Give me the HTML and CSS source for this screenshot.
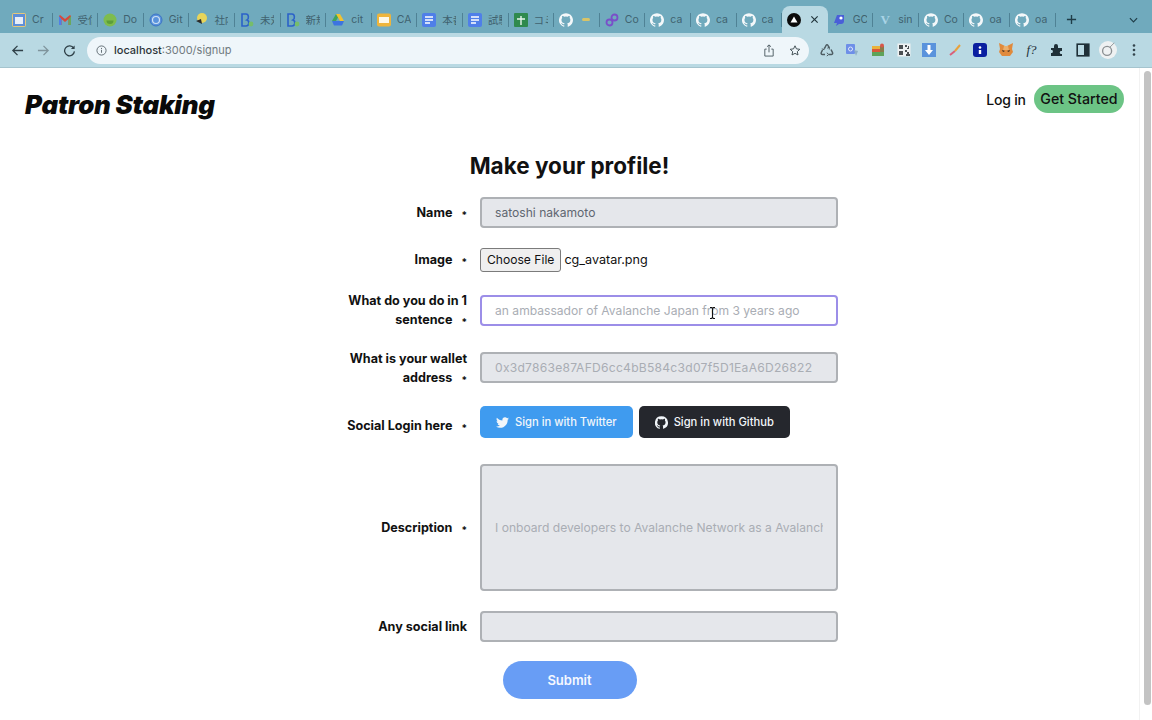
FILE: index.html
```html
<!DOCTYPE html>
<html lang="en">
<head>
  <meta charset="UTF-8">
  <meta name="viewport" content="width=device-width, initial-scale=1.0">
  <title>Patron Staking</title>
  <link rel="stylesheet" href="styles.css">
</head>
<body>
  <svg class="defs" xmlns="http://www.w3.org/2000/svg">
    <symbol id="gh" viewBox="0 0 24 24"><path d="M12 .3a12 12 0 0 0-3.8 23.4c.6.1.8-.3.8-.6v-2c-3.3.7-4-1.600-4-1.600-.6-1.400-1.400-1.800-1.400-1.800-1-.7.1-.7.1-.7 1.200.1 1.800 1.200 1.800 1.200 1 1.800 2.800 1.300 3.500 1 .1-.8.4-1.300.7-1.600-2.700-.3-5.500-1.300-5.500-6 0-1.200.5-2.300 1.300-3.100-.2-.4-.6-1.600 0-3.200 0 0 1-.3 3.400 1.200a11.500 11.500 0 0 1 6 0c2.300-1.500 3.300-1.200 3.300-1.200.6 1.600.2 2.800 0 3.200.9.8 1.300 1.900 1.300 3.200 0 4.600-2.800 5.600-5.500 5.900.5.4.9 1 .9 2.200v3.300c0 .3.1.7.8.6A12 12 0 0 0 12 .3"/></symbol>
    <symbol id="doc" viewBox="0 0 14 14"><rect width="14" height="14" rx="2" fill="#4f7fe8"/><path d="M3 4h8M3 7h8M3 10h5" stroke="#fff" stroke-width="1.400"/></symbol>
    <symbol id="bee" viewBox="0 0 14 14"><path d="M2 1h4c3 0 3 5 1 6 3 1 2 6-1 6H2z" fill="none" stroke="#2b62c9" stroke-width="1.600"/><circle cx="11" cy="11" r="2.400" fill="#76bd6a"/></symbol>
  </svg>

  <div class="tabstrip">
    <div class="tab"><svg class="fav" viewBox="0 0 14 14"><rect width="14" height="14" rx="2" fill="#e6c77a"/><rect x="1" y="1" width="12" height="12" fill="#5f8fd8"/><rect x="3" y="4" width="8" height="7" fill="#e8eef8"/></svg><span>Cr</span></div>
    <div class="tab"><svg class="fav" viewBox="0 0 14 14"><path d="M1 3v9h2.500V6L7 9l3.500-3v6H13V3l-1-1-5 4-5-4z" fill="#d8483a"/><path d="M1 3v9h2.500V6z" fill="#4f7fe8"/><path d="M13 3v9h-2.500V6z" fill="#6ba75c"/></svg><span>受信</span></div>
    <div class="tab"><svg class="fav" viewBox="0 0 14 14"><circle cx="7" cy="7" r="6.500" fill="#7ebc4e"/><path d="M3.500 7.500a3.500 3.500 0 0 0 7 0z" fill="#5c9e3a"/></svg><span>Do</span></div>
    <div class="tab"><svg class="fav" viewBox="0 0 14 14"><circle cx="7" cy="7" r="6" fill="#5a93dc" stroke="#3d74c4"/><circle cx="7" cy="7" r="3.500" fill="none" stroke="#cfe2f5" stroke-width="1.200"/></svg><span>Git</span></div>
    <div class="tab"><svg class="fav" viewBox="0 0 14 14"><circle cx="8" cy="5" r="5" fill="#e8d55a"/><path d="M2 8l5-2 1 5z" fill="#2b2b2b"/></svg><span>社内</span></div>
    <div class="tab"><svg class="fav"><use href="#bee"/></svg><span>未対</span></div>
    <div class="tab"><svg class="fav"><use href="#bee"/></svg><span>新規</span></div>
    <div class="tab"><svg class="fav" viewBox="0 0 14 14"><path d="M5 1h4l-4 7H1z" fill="#3fa45b"/><path d="M9 1l4 7h-4L5 1z" fill="#f2c230"/><path d="M1 8h12l-2 4.500H3z" fill="#3d74e0"/></svg><span>cit</span></div>
    <div class="tab"><svg class="fav" viewBox="0 0 14 14"><rect width="14" height="13" y=".5" rx="2" fill="#eeb53c"/><rect x="2" y="4" width="10" height="6" fill="#fdf8e8"/></svg><span>CA</span></div>
    <div class="tab"><svg class="fav"><use href="#doc"/></svg><span>本番</span></div>
    <div class="tab"><svg class="fav"><use href="#doc"/></svg><span>試験</span></div>
    <div class="tab"><svg class="fav" viewBox="0 0 14 14"><rect width="14" height="14" rx="1" fill="#2f8a4e"/><path d="M7 3v9M3 6h8" stroke="#e8f5ec" stroke-width="1.400"/></svg><span>コミ</span></div>
    <div class="tab"><svg class="fav gh"><use href="#gh"/></svg><i class="spark"></i></div>
    <div class="tab"><svg class="fav" viewBox="0 0 14 14" fill="none" stroke="#7a4fc9" stroke-width="1.800"><circle cx="4.500" cy="9.500" r="3"/><circle cx="9.500" cy="4.500" r="3"/></svg><span>Co</span></div>
    <div class="tab"><svg class="fav gh"><use href="#gh"/></svg><span>ca</span></div>
    <div class="tab"><svg class="fav gh"><use href="#gh"/></svg><span>ca</span></div>
    <div class="tab"><svg class="fav gh"><use href="#gh"/></svg><span>ca</span></div>
    <div class="tab tab-active">
      <svg class="fav" viewBox="0 0 14 14"><circle cx="7" cy="7" r="7" fill="#0b0b0b"/><path d="M7 3.500l3.500 6h-7z" fill="#fff"/></svg>
      <svg class="tab-close" viewBox="0 0 10 10"><path d="M1.500 1.500l7 7M8.500 1.500l-7 7" stroke="#23363d" stroke-width="1.300"/></svg>
    </div>
    <div class="tab"><svg class="fav" viewBox="0 0 14 14"><path d="M4 2h7v6a3 3 0 0 1-3 3H6l-3 2 1-3H1z" fill="#4a5fd8"/><circle cx="8" cy="5" r="1.600" fill="#fff"/></svg><span>GC</span></div>
    <div class="tab"><b class="fav-v">V</b><span>sin</span></div>
    <div class="tab"><svg class="fav gh"><use href="#gh"/></svg><span>Co</span></div>
    <div class="tab"><svg class="fav gh"><use href="#gh"/></svg><span>oa</span></div>
    <div class="tab"><svg class="fav gh"><use href="#gh"/></svg><span>oa</span></div>
    <svg class="new-tab" viewBox="0 0 12 12"><path d="M6 1v10M1 6h10" stroke="#1f3d48" stroke-width="1.500"/></svg>
    <svg class="tab-menu" viewBox="0 0 10 6"><path d="M1 1l4 4 4-4" fill="none" stroke="#1f3d48" stroke-width="1.300"/></svg>
  </div>

  <div class="toolbar">
    <div class="nav-btn"><svg viewBox="0 0 14 14"><path d="M13 7H2M7 2L2 7l5 5" fill="none" stroke="#2f4048" stroke-width="1.400"/></svg></div>
    <div class="nav-btn"><svg viewBox="0 0 14 14"><path d="M1 7h11M7 2l5 5-5 5" fill="none" stroke="#7f949c" stroke-width="1.400"/></svg></div>
    <div class="nav-btn"><svg viewBox="0 0 14 14"><path d="M11.500 4.500A5.300 5.300 0 1 0 12.300 8" fill="none" stroke="#2f4048" stroke-width="1.400"/><path d="M12.500 1.500v4h-4z" fill="#2f4048"/></svg></div>
    <div class="address">
      <svg class="addr-info" viewBox="0 0 12 12"><circle cx="6" cy="6" r="5" fill="none" stroke="#5a666c"/><path d="M6 5.300v3.200M6 3.200v1.200" stroke="#5a666c"/></svg>
      <span class="url"><b>localhost</b>:3000/signup</span>
      <svg class="addr-act" viewBox="0 0 12 14"><path d="M3.500 5.500H1.500v7.500h9V5.500H8.500M6 9V1M3.800 3L6 1l2.200 2" fill="none" stroke="#4c5a60"/></svg>
      <svg class="addr-act" viewBox="0 0 14 14"><path d="M7 1.500l1.700 3.600 3.900.5-2.900 2.700.8 3.900L7 10.300l-3.500 1.900.8-3.900L1.400 5.600l3.900-.5z" fill="none" stroke="#3d4a50" stroke-width="1.100"/></svg>
    </div>
    <div class="ext-list">
      <div class="ext"><svg viewBox="0 0 14 14" fill="none" stroke="#4d5c62" stroke-width="1.500"><path d="M4.500 5.500L6 2.500c.5-.9 1.500-.9 2 0l1.300 2.300M11 6.500l1.500 3c.5 1-.1 2-1.200 2H9M5 11.500H2.500c-1.100 0-1.700-1-1.200-2L2.500 7"/><path d="M9.300 6.500v-2.300l-2 1M6.800 9.800l2 1.700-2 1.500M1.800 5.800l2.300.9.300-2.300" stroke-width="1"/></svg></div>
      <div class="ext"><svg viewBox="0 0 14 14"><rect x="1" y="1" width="9" height="10" rx="1" fill="#6e8fe8"/><circle cx="5.500" cy="6" r="2" fill="none" stroke="#dfe7fa"/><path d="M9 7l4 1-2 5z" fill="#8fb0c8"/></svg></div>
      <div class="ext"><svg viewBox="0 0 14 14"><rect x="1" y="3" width="9" height="3" fill="#e9b23c"/><rect x="1" y="6" width="9" height="3" fill="#d9573a"/><rect x="1" y="9" width="12" height="4" fill="#5ea35a"/><rect x="9" y="3" width="4" height="6" fill="#8a7a48"/><circle cx="11" cy="2.500" r="2" fill="#d8574a"/></svg></div>
      <div class="ext"><svg viewBox="0 0 14 14"><rect x=".5" y=".5" width="13" height="13" fill="#eef1f2"/><path d="M2 2h4v4H2zM8 2h2v2H8zM11 3h1v3h-2V5h1zM2 8h4v4H2zM8 7h2v2H8zM10 9h2v2h1v2H9v-2h1z" fill="#4a4f52"/></svg></div>
      <div class="ext"><svg viewBox="0 0 14 14"><rect width="14" height="14" fill="#5a93dc"/><path d="M5.500 2h3v5H11l-4 5-4-5h2.500z" fill="#fff"/></svg></div>
      <div class="ext"><svg viewBox="0 0 14 14"><path d="M2 12l5-4" stroke="#d9607a" stroke-width="2"/><path d="M7 8l5-6" stroke="#e8a23c" stroke-width="2"/></svg></div>
      <div class="ext"><svg viewBox="0 0 14 14"><rect width="14" height="14" rx="3" fill="#0a1fa0"/><circle cx="7" cy="4.500" r="1.300" fill="#fff"/><rect x="5.800" y="7" width="2.400" height="4" fill="#fff"/></svg></div>
      <div class="ext"><svg viewBox="0 0 14 14"><path d="M0 0l6 3h2l6-3-1 6 1 3-3 4H3L0 9l1-3z" fill="#e08a3c"/><path d="M5 3h4l1 4H4z" fill="#eab06e"/><path d="M3 7l3 1-2 1zM11 7L8 8l2 1z" fill="#3a2a1c"/></svg></div>
      <div class="ext"><span class="ext-f">f?</span></div>
      <div class="ext"><svg viewBox="0 0 14 14"><path d="M1 5h3V3a2 2 0 0 1 4 0v2h4v3h-1.500a2 2 0 0 0 0 3H12v2H1v-3h1a1.700 1.700 0 0 0 0-3H1z" fill="#1f3038"/></svg></div>
      <div class="ext"><svg viewBox="0 0 14 14"><rect x="1.200" y="1.200" width="11.600" height="11.600" fill="none" stroke="#1f3038" stroke-width="1.600"/><rect x="8" y="2" width="4" height="10" fill="#1f3038"/></svg></div>
      <div class="ext"><svg class="ext-avatar" viewBox="0 0 20 20"><circle cx="10" cy="10" r="10" fill="#eef1f2"/><circle cx="9" cy="11" r="5" fill="none" stroke="#8a8f92" stroke-width="1.500"/><path d="M12 7l5-5" stroke="#8a8f92"/></svg></div>
      <div class="ext"><svg viewBox="0 0 14 14"><circle cx="7" cy="2.500" r="1.300" fill="#33444c"/><circle cx="7" cy="7" r="1.300" fill="#33444c"/><circle cx="7" cy="11.500" r="1.300" fill="#33444c"/></svg></div>
    </div>
  </div>

  <div class="viewport">
    <div class="page">
      <header class="site-header">
        <div class="logo">Patron Staking</div>
        <nav class="site-nav">
          <a class="login">Log in</a>
          <a class="get-started">Get Started</a>
        </nav>
      </header>

      <h1>Make your profile!</h1>

      <form class="profile-form">
        <label class="lbl">Name <em>*</em></label>
        <input class="field" type="text" value="satoshi nakamoto">

        <label class="lbl">Image <em>*</em></label>
        <div class="file-row"><span class="file-btn">Choose File</span><span>cg_avatar.png</span></div>

        <label class="lbl">What do you do in 1 sentence <em>*</em></label>
        <div class="field-wrap">
          <input class="field field-focus" type="text" placeholder="an ambassador of Avalanche Japan from 3 years ago">
          <svg class="ibeam" viewBox="0 0 7 12"><path d="M1 .5h1.500l1 1 1-1H6M3.500 1.500v9M1 11.500h1.500l1-1 1 1H6" fill="none" stroke="#111" stroke-width="1.100"/></svg>
        </div>

        <label class="lbl">What is your wallet address <em>*</em></label>
        <input class="field field-addr" type="text" placeholder="0x3d7863e87AFD6cc4bB584c3d07f5D1EaA6D26822">

        <label class="lbl">Social Login here <em>*</em></label>
        <div class="social-row">
          <a class="social twitter"><svg viewBox="0 0 24 24"><path d="M23.953 4.570a10 10 0 01-2.825.775 4.958 4.958 0 002.163-2.723c-.951.555-2.005.959-3.127 1.184a4.920 4.920 0 00-8.384 4.482C7.690 8.095 4.067 6.130 1.640 3.162a4.822 4.822 0 00-.666 2.475c0 1.710.870 3.213 2.188 4.096a4.904 4.904 0 01-2.228-.616v.060a4.923 4.923 0 003.946 4.827 4.996 4.996 0 01-2.212.085 4.936 4.936 0 004.604 3.417 9.867 9.867 0 01-6.102 2.105c-.390 0-.779-.023-1.170-.067a13.995 13.995 0 007.557 2.209c9.053 0 13.998-7.496 13.998-13.985 0-.210 0-.420-.015-.630A9.935 9.935 0 0024 4.590z"/></svg>Sign in with Twitter</a>
          <a class="social github"><svg><use href="#gh"/></svg>Sign in with Github</a>
        </div>

        <label class="lbl">Description <em>*</em></label>
        <input class="field field-tall" type="text" placeholder="I onboard developers to Avalanche Network as a Avalanche ambassador">

        <label class="lbl">Any social link</label>
        <input class="field" type="text">

        <button class="submit" type="button">Submit</button>
      </form>
    </div>
    <div class="scrollbar"><div class="thumb"></div></div>
  </div>
</body>
</html>
```

FILE: styles.css
```css
* {
  box-sizing: border-box;
}
html, body {
  margin: 0;
  height: 100%;
  overflow: hidden;
}
body {
  display: flex;
  flex-direction: column;
  background: #fff;
  color: #111;
  font-family: Inter, "Noto Sans CJK JP", sans-serif;
}
.defs {
  display: none;
}

/* browser chrome */
.tabstrip {
  display: flex;
  align-items: flex-end;
  height: 33px;
  padding-left: 7px;
  background: #70aabd;
}
.tab {
  display: flex;
  align-items: center;
  gap: 6px;
  width: 45.6px;
  height: 27px;
  padding-left: 5px;
  overflow: hidden;
  white-space: nowrap;
  font-size: 10.5px;
  color: #40626f;
  position: relative;
}
.tab::after {
  content: "";
  position: absolute;
  right: 0;
  top: 7px;
  height: 14px;
  width: 1px;
  background: #4f8295;
}
.tab span {
  width: 14px;
  overflow: hidden;
  flex: none;
}
.fav {
  width: 14px;
  height: 14px;
  flex: none;
}
.fav.gh {
  fill: #f4f8fa;
}
.fav-v {
  width: 14px;
  flex: none;
  text-align: center;
  font: bold 13px "Liberation Serif", serif;
  color: #a9d4e6;
}
.spark {
  width: 8px;
  height: 3px;
  margin-left: 3px;
  background: #d8c468;
  border-radius: 2px;
}
.tab-active {
  background: #b9d9e3;
  border-radius: 8px 8px 0 0;
  gap: 0;
}
.tab-active::after {
  display: none;
}
.tab-close {
  width: 9px;
  height: 9px;
  margin-left: 9px;
  flex: none;
}
.new-tab {
  width: 11px;
  height: 11px;
  margin: 0 0 8px 10px;
}
.tab-menu {
  width: 9px;
  height: 6px;
  margin: 0 0 10px 52px;
}
.toolbar {
  display: flex;
  align-items: center;
  height: 35px;
  padding-left: 4px;
  background: #b9d9e3;
  border-bottom: 1px solid #a5c4ce;
}
.nav-btn {
  width: 26px;
  display: flex;
  justify-content: center;
}
.nav-btn svg {
  width: 13px;
  height: 13px;
}
.address {
  display: flex;
  align-items: center;
  width: 722px;
  height: 27px;
  margin-left: 5px;
  padding: 0 8px 0 9px;
  border-radius: 14px;
  background: #eff6fa;
}
.addr-info {
  width: 11px;
  height: 11px;
  flex: none;
}
.url {
  margin-left: 7px;
  flex: 1;
  font-size: 11px;
  color: #6f7a80;
}
.url b {
  font-weight: 500;
  color: #2c3438;
}
.addr-act {
  width: 12px;
  height: 13px;
  margin-left: 14px;
}
.ext-list {
  display: flex;
  margin-left: 5px;
}
.ext {
  width: 25.6px;
  height: 20px;
  display: flex;
  align-items: center;
  justify-content: center;
}
.ext svg {
  width: 14px;
  height: 14px;
}
.ext .ext-avatar {
  width: 18px;
  height: 18px;
}
.ext-f {
  font: italic 13px "Liberation Serif", serif;
  color: #1f3038;
}

/* page */
.viewport {
  flex: 1;
  display: flex;
  min-height: 0;
}
.page {
  flex: 1;
  min-width: 0;
}
.scrollbar {
  width: 13px;
  padding: 3px 1px 15px 4px;
  border-left: 1px solid #f2f2f2;
}
.thumb {
  height: 100%;
  background: #c3c3c3;
  border-radius: 4px;
}
.site-header {
  display: flex;
  justify-content: space-between;
  align-items: flex-start;
  padding: 17px 15px 0 25px;
}
.logo {
  margin-top: 5px;
  font-size: 25.8px;
  line-height: 30px;
  font-weight: 900;
  font-style: italic;
  letter-spacing: -0.2px;
  color: #0a0a0a;
}
.site-nav {
  display: flex;
  align-items: center;
  gap: 8px;
  font-size: 14px;
  font-weight: 500;
}
.login {
  letter-spacing: -0.2px;
}
.get-started {
  height: 28px;
  line-height: 28px;
  padding: 0 6.5px;
  border-radius: 14px;
  background: #6cc485;
  font-size: 14.2px;
}
h1 {
  margin: 31px 0 16px;
  text-align: center;
  font-size: 22.5px;
  line-height: 30px;
  font-weight: 700;
}
.profile-form {
  display: grid;
  grid-template-columns: 166px 358px;
  column-gap: 13px;
  row-gap: 19.5px;
  align-items: center;
  width: 537px;
  margin: 0 auto;
}
.lbl {
  text-align: right;
  font-size: 12.6px;
  line-height: 19px;
  font-weight: 700;
}
.lbl em {
  font-style: normal;
  font-size: 10px;
  line-height: 0;
  margin-left: 6px;
  vertical-align: -2px;
}
.field-wrap {
  position: relative;
}
.field {
  display: block;
  width: 100%;
  height: 31px;
  padding: 0 13px;
  border: 2px solid #aeb1b5;
  border-radius: 4px;
  background: #e5e7eb;
  font: 12.1px Inter, sans-serif;
  color: #5f6670;
  outline: none;
}
.field::placeholder {
  color: #a9adb4;
  opacity: 1;
}
.field-focus {
  background: #fff;
  border-color: #9c8ee8;
}
.field-addr {
  letter-spacing: 0.25px;
}
.field-tall {
  height: 127.5px;
}
.ibeam {
  position: absolute;
  left: 229px;
  top: 12px;
  width: 7px;
  height: 12px;
}
.file-row {
  display: flex;
  align-items: center;
  gap: 3px;
  font-size: 12.6px;
}
.file-btn {
  height: 24px;
  line-height: 22px;
  padding: 0 6px;
  border: 1px solid #7b7b7b;
  border-radius: 3px;
  background: #efefef;
  font-size: 12.1px;
}
.social-row {
  display: flex;
  gap: 6px;
  height: 38px;
}
.social {
  display: flex;
  align-items: center;
  gap: 6px;
  height: 32px;
  padding: 0 16px;
  border-radius: 5px;
  font-size: 11.2px;
  font-weight: 500;
  color: #f2f6fa;
}
.social svg {
  width: 13px;
  height: 13px;
  fill: currentColor;
}
.twitter {
  background: #3f9bef;
}
.github {
  background: #25272d;
}
.submit {
  grid-column: 1 / -1;
  justify-self: center;
  width: 134px;
  height: 38px;
  border: none;
  border-radius: 19px;
  background: #689df5;
  color: #f5f8ff;
  font: 600 13px Inter, sans-serif;
}
```
